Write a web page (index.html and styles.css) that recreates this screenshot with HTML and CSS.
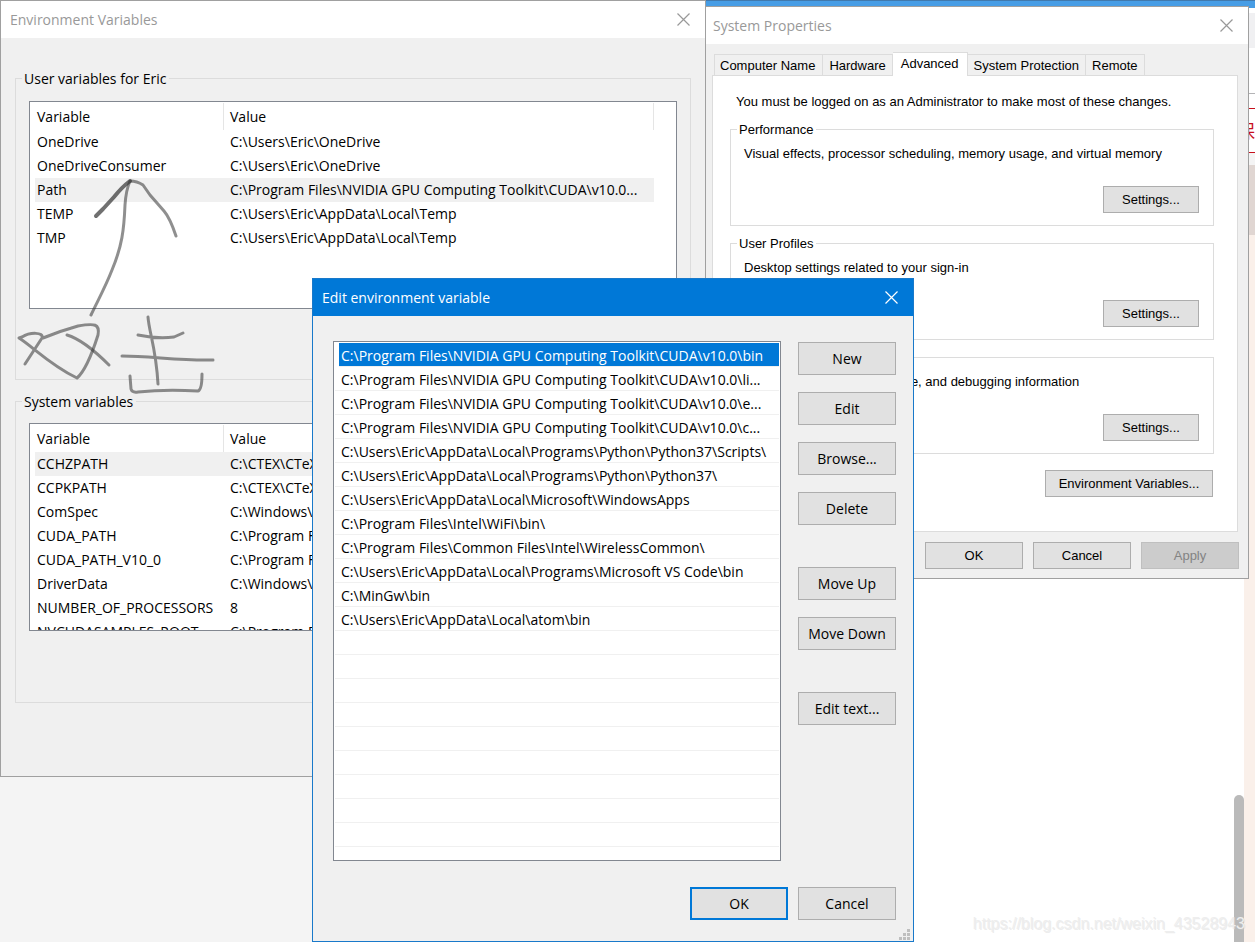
FILE: index.html
```html
<!DOCTYPE html>
<html lang="en">
<head>
<meta charset="utf-8">
<title>Edit environment variable</title>
<link rel="stylesheet" href="styles.css">
</head>
<body>
<div class="desktop">
  <div class="page-top"></div>
  <div class="page">
    <div class="page-left"></div>
    <div class="page-main"><div class="scroll-thumb"></div></div>
    <div class="page-edge"></div>
  </div>
  <div class="edge-top">
    <div class="edge-bar"></div>
    <div class="edge-gap"></div>
    <div class="edge-box"><span>保</span></div>
    <div class="edge-foot"></div>
    <div class="edge-banner"></div>
  </div>

  <section class="window props" aria-label="System Properties">
    <header class="titlebar">
      <h2>System Properties</h2>
      <button class="close" aria-label="Close"><svg viewBox="0 0 13 13"><path d="M.5.5l12 12M12.5.5l-12 12"/></svg></button>
    </header>
    <div class="props-body">
      <div class="tabs" role="tablist">
        <button class="tab" role="tab">Computer Name</button>
        <button class="tab" role="tab">Hardware</button>
        <button class="tab active" role="tab" aria-selected="true">Advanced</button>
        <button class="tab" role="tab">System Protection</button>
        <button class="tab" role="tab">Remote</button>
      </div>
      <div class="panel" role="tabpanel">
        <p class="note">You must be logged on as an Administrator to make most of these changes.</p>
        <section class="group">
          <h3>Performance</h3>
          <p>Visual effects, processor scheduling, memory usage, and virtual memory</p>
          <button class="btn">Settings...</button>
        </section>
        <section class="group">
          <h3>User Profiles</h3>
          <p>Desktop settings related to your sign-in</p>
          <button class="btn">Settings...</button>
        </section>
        <section class="group">
          <h3>Startup and Recovery</h3>
          <p>System startup, system failure, and debugging information</p>
          <button class="btn">Settings...</button>
        </section>
        <button class="btn env">Environment Variables...</button>
      </div>
      <footer class="actions">
        <button class="btn">OK</button>
        <button class="btn">Cancel</button>
        <button class="btn" disabled>Apply</button>
      </footer>
    </div>
  </section>

  <section class="window vars" aria-label="Environment Variables">
    <header class="titlebar">
      <h2>Environment Variables</h2>
      <button class="close" aria-label="Close"><svg viewBox="0 0 13 13"><path d="M.5.5l12 12M12.5.5l-12 12"/></svg></button>
    </header>
    <div class="vars-body">
      <section class="group">
        <h3>User variables for Eric</h3>
        <div class="list">
          <table>
            <thead><tr><th>Variable</th><th>Value</th></tr></thead>
            <tbody>
              <tr><td>OneDrive</td><td>C:\Users\Eric\OneDrive</td></tr>
              <tr><td>OneDriveConsumer</td><td>C:\Users\Eric\OneDrive</td></tr>
              <tr class="selected"><td>Path</td><td>C:\Program Files\NVIDIA GPU Computing Toolkit\CUDA\v10.0...</td></tr>
              <tr><td>TEMP</td><td>C:\Users\Eric\AppData\Local\Temp</td></tr>
              <tr><td>TMP</td><td>C:\Users\Eric\AppData\Local\Temp</td></tr>
            </tbody>
          </table>
        </div>
      </section>
      <section class="group">
        <h3>System variables</h3>
        <div class="list">
          <table>
            <thead><tr><th>Variable</th><th>Value</th></tr></thead>
            <tbody>
              <tr class="selected"><td>CCHZPATH</td><td>C:\CTEX\CTeX</td></tr>
              <tr><td>CCPKPATH</td><td>C:\CTEX\CTeX</td></tr>
              <tr><td>ComSpec</td><td>C:\Windows\system32</td></tr>
              <tr><td>CUDA_PATH</td><td>C:\Program Files</td></tr>
              <tr><td>CUDA_PATH_V10_0</td><td>C:\Program Files</td></tr>
              <tr><td>DriverData</td><td>C:\Windows\System32</td></tr>
              <tr><td>NUMBER_OF_PROCESSORS</td><td>8</td></tr>
              <tr><td>NVCUDASAMPLES_ROOT</td><td>C:\Program Files</td></tr>
            </tbody>
          </table>
        </div>
      </section>
    </div>
    <svg class="ink" viewBox="0 0 220 230">
      <path class="heavy" d="M96 46L103 39L114 27Q122 17 130 11"/>
      <path d="M91 145C97 132 105 118 112 100C122 76 124 60 125 35Q126 20 130 11Q137 11 143 15L150 25L164 41Q170 48 176 66"/>
      <path d="M25 194L42 168C44 162 30 162 22 167L19 168C32 176 50 195 77 208C84 202 92 184 98 165C100 154 95 153 78 156Q60 161 43 168"/>
      <path d="M67 165Q84 170 109 195"/>
      <path d="M148 147C149 162 156 178 158 214M138 165Q157 169 174 167L183 163M122 186C150 186 181 191 213 190M130 206L131 219Q132 223 138 222Q165 219 198 221Q202 220 202 204"/>
    </svg>
  </section>

  <section class="window edit" aria-label="Edit environment variable">
    <header class="titlebar">
      <h2>Edit environment variable</h2>
      <button class="close" aria-label="Close"><svg viewBox="0 0 13 13"><path d="M.5.5l12 12M12.5.5l-12 12"/></svg></button>
    </header>
    <div class="edit-body">
      <ul class="paths">
        <li class="selected">C:\Program Files\NVIDIA GPU Computing Toolkit\CUDA\v10.0\bin</li>
        <li>C:\Program Files\NVIDIA GPU Computing Toolkit\CUDA\v10.0\li...</li>
        <li>C:\Program Files\NVIDIA GPU Computing Toolkit\CUDA\v10.0\e...</li>
        <li>C:\Program Files\NVIDIA GPU Computing Toolkit\CUDA\v10.0\c...</li>
        <li>C:\Users\Eric\AppData\Local\Programs\Python\Python37\Scripts\</li>
        <li>C:\Users\Eric\AppData\Local\Programs\Python\Python37\</li>
        <li>C:\Users\Eric\AppData\Local\Microsoft\WindowsApps</li>
        <li>C:\Program Files\Intel\WiFi\bin\</li>
        <li>C:\Program Files\Common Files\Intel\WirelessCommon\</li>
        <li>C:\Users\Eric\AppData\Local\Programs\Microsoft VS Code\bin</li>
        <li>C:\MinGw\bin</li>
        <li>C:\Users\Eric\AppData\Local\atom\bin</li>
        <li></li><li></li><li></li><li></li><li></li><li></li><li></li><li></li><li></li>
      </ul>
      <div class="side">
        <div class="stack">
          <button class="btn">New</button>
          <button class="btn">Edit</button>
          <button class="btn">Browse...</button>
          <button class="btn">Delete</button>
        </div>
        <div class="stack">
          <button class="btn">Move Up</button>
          <button class="btn">Move Down</button>
        </div>
        <div class="stack">
          <button class="btn">Edit text...</button>
        </div>
      </div>
    </div>
    <footer class="actions">
      <button class="btn default">OK</button>
      <button class="btn">Cancel</button>
    </footer>
    <svg class="grip" viewBox="0 0 11 11"><path d="M8 0h3v3H8zM4 4h3v3H4zM8 4h3v3H8zM0 8h3v3H0zM4 8h3v3H4zM8 8h3v3H8z"/></svg>
  </section>

  <div class="watermark">https://blog.csdn.net/weixin_43528943</div>
</div>
</body>
</html>
```

FILE: styles.css
```css
* { box-sizing: border-box; }
body { margin: 0; color: #000; font: 14px/24px "Open Sans", "Noto Sans", sans-serif; }
h2, h3, p, ul { margin: 0; padding: 0; font-size: inherit; font-weight: 400; }
button { font: inherit; color: inherit; padding: 0; }

.desktop { position: relative; display: flex; flex-direction: column; min-height: 100vh; overflow: hidden; background: #fff; }
.page-top { height: 8px; background: #479de5; border-top: 1px solid #4179ad; }
.page { flex: 1; display: flex; }
.page-left { width: 312px; background: #f4f4f4; }
.page-main { flex: 1; display: flex; justify-content: flex-end; align-items: flex-end; }
.page-edge { width: 11px; background: #faf0ea; }
.scroll-thumb { width: 10px; height: 147px; border-radius: 5px 5px 0 0; background: #bababa; }

.edge-top { position: absolute; top: 8px; right: 0; width: 18px; padding-top: 5px; background: #fff; }
.edge-bar { height: 35px; background: #f0f0f2; }
.edge-gap { height: 46px; border-bottom: 1px solid #b4b4b6; }
.edge-box { height: 59px; padding-top: 14px; background: #fff; }
.edge-box span { display: block; border: solid #c7101c; border-width: 1px 0; color: #c7101c; font: 18px/43px "Noto Sans CJK SC", sans-serif; }
.edge-foot { height: 12px; background: #f4f4f4; }
.edge-banner { height: 70px; background: #e0d6d2; }

.window { position: absolute; display: flex; flex-direction: column; border: 1px solid #a0a0a0; background: #f0f0f0; }
.titlebar { display: flex; justify-content: space-between; align-items: center; height: 37px; padding: 0 15px 0 9px; background: #fff; color: #999; }
.close { display: flex; border: 0; background: none; }
.close svg { width: 13px; height: 13px; fill: none; stroke: currentColor; stroke-width: 1.2; }
.btn { height: 33px; border: 1px solid #adadad; background: #e1e1e1; text-align: center; }
.actions { display: flex; justify-content: flex-end; gap: 10px; }
.group { position: relative; border: 1px solid #dcdcdc; }
.group h3 { position: absolute; background: inherit; }

.props { top: 6px; left: 705px; width: 544px; }
.props .titlebar { padding-left: 7px; }
.props-body { padding: 8px 9px 9px 6px; font: 13px/16px "Liberation Sans", Arial, sans-serif; }
.props-body .btn { height: 27px; }
.tabs { display: flex; align-items: flex-end; padding-left: 2px; }
.tab { height: 21px; padding: 2px 6px 0; border: 1px solid #dcdcdc; border-width: 1px 1px 0 0; background: #f0f0f0; white-space: nowrap; }
.tab:first-child { padding: 2px 7px 0 5px; border-left-width: 1px; }
.tab.active { height: 24px; padding: 0 8px 1px; margin-bottom: -1px; z-index: 1; background: #fff; }
.panel { display: flex; flex-direction: column; height: 457px; margin-right: 1px; padding: 18px 23px 0 17px; border: 1px solid #dcdcdc; background: #fff; }
.note { padding: 0 6px; margin-bottom: 19px; }
.panel .group { display: flex; flex-direction: column; height: 97px; margin-bottom: 17px; padding: 16px 14px 12px 13px; }
.panel .group h3 { top: -8px; left: 6px; padding: 0 3px 0 2px; background: #fff; }
.panel .group .btn { width: 96px; margin-top: auto; align-self: flex-end; }
.panel .group:nth-of-type(3) { margin-bottom: 16px; }
.panel .env { width: 168px; margin-right: 1px; align-self: flex-end; }
.props .actions { margin-top: 10px; }
.props .actions .btn { width: 98px; }
.props .btn:disabled { border-color: #bfbfbf; background: #ccc; color: #838383; }

.vars { top: 0; left: 0; width: 706px; height: 777px; }
.vars-body { display: flex; flex-direction: column; gap: 21px; padding: 40px 14px 0; }
.vars .group { height: 302px; padding: 22px 13px 0; }
.vars .group + .group { padding-top: 21px; }
.vars .group h3 { top: -12px; left: 6px; padding: 0 3px 0 2px; background: #f0f0f0; }
.list { height: 208px; padding: 1px 22px 0 5px; overflow: hidden; border: 1px solid #828790; background: #fff; }
table { width: 100%; table-layout: fixed; border-collapse: separate; border-spacing: 0; }
th, td { height: 24px; padding: 0 2px; font-weight: 400; line-height: 24px; text-align: left; white-space: nowrap; }
th { height: 27px; border-right: 1px solid #e5e5e5; }
th:first-child { width: 189px; }
th + th, td + td { padding: 0 0 0 6px; }
tr.selected { background: #f0f0f0; }

.ink { position: absolute; top: 169px; left: -1px; width: 220px; height: 230px; fill: none; stroke: #333; stroke-opacity: .55; stroke-width: 3; stroke-linecap: round; stroke-linejoin: round; pointer-events: none; }
.ink .heavy { stroke-opacity: .7; stroke-width: 4; }

.edit { top: 278px; left: 312px; width: 602px; min-height: 664px; border-color: #1979ca; }
.edit .titlebar { background: #0078d7; color: #fff; }
.edit-body { display: flex; gap: 17px; padding: 25px 17px 0 20px; }
.paths { flex: 1; height: 520px; padding: 1px; overflow: hidden; border: 1px solid #828790; background: #fff; list-style: none; }
.paths li { height: 24px; padding-left: 6px; border-bottom: 1px solid #f0f0f0; line-height: 26px; white-space: nowrap; }
.paths .selected { margin-left: 4px; padding-left: 2px; background: #0078d7; background-clip: padding-box; color: #fff; }
.side { display: flex; flex-direction: column; gap: 42px; width: 98px; padding-top: 1px; }
.stack { display: flex; flex-direction: column; gap: 17px; }
.edit .actions { padding: 26px 17px 0 0; }
.edit .actions .btn { width: 98px; }
.btn.default { border: 2px solid #0078d7; }
.grip { position: absolute; right: 3px; bottom: 1px; width: 11px; height: 11px; fill: #bfbfbf; }

.watermark { position: absolute; right: 10px; bottom: 7px; color: #eee; font: 16px/22px "Liberation Sans", Arial, sans-serif; text-shadow: 1px 1px 0 #cfcfcf66; }
```
